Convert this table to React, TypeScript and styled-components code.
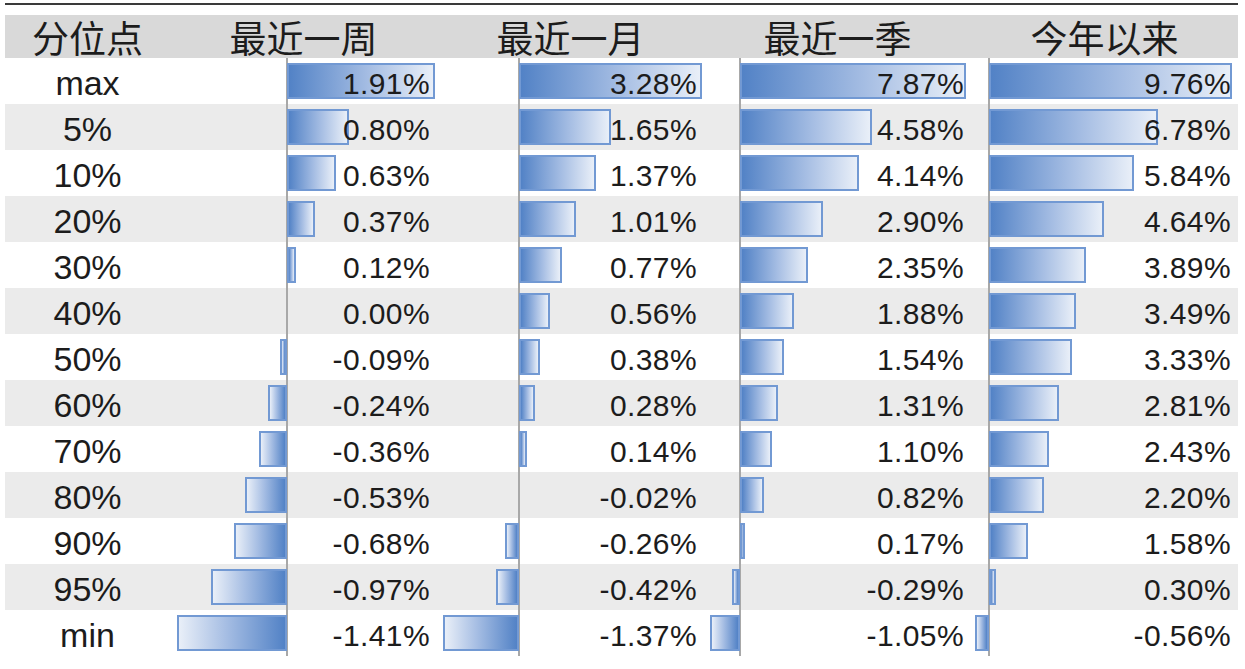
import React from 'react';
import styled, { createGlobalStyle } from 'styled-components';

const GlobalStyle = createGlobalStyle`
    body {
        margin: 0;
        background: #ffffff;
        font-family: 'Liberation Sans', Arial, sans-serif;
        color: #1c1c1c;
    }
`;

const LABEL_W = 165;
const COL_W = 267;

const labels = ['max', '5%', '10%', '20%', '30%', '40%', '50%', '60%', '70%', '80%', '90%', '95%', 'min'];

// lo / hi: pixel offsets inside a column where the min and max bars end
const columns = [
    { title: '最近一周', lo: 7, hi: 265, values: [1.91, 0.8, 0.63, 0.37, 0.12, 0.0, -0.09, -0.24, -0.36, -0.53, -0.68, -0.97, -1.41] },
    { title: '最近一月', lo: 6, hi: 265, values: [3.28, 1.65, 1.37, 1.01, 0.77, 0.56, 0.38, 0.28, 0.14, -0.02, -0.26, -0.42, -1.37] },
    { title: '最近一季', lo: 6, hi: 262, values: [7.87, 4.58, 4.14, 2.9, 2.35, 1.88, 1.54, 1.31, 1.1, 0.82, 0.17, -0.29, -1.05] },
    { title: '今年以来', lo: 4, hi: 261, values: [9.76, 6.78, 5.84, 4.64, 3.89, 3.49, 3.33, 2.81, 2.43, 2.2, 1.58, 0.3, -0.56] },
];

const Page = styled.div`
    padding: 3px 0 0 5px;
    width: ${LABEL_W + COL_W * 4}px;
`;

const TopRule = styled.div`
    height: 2px;
    background: #3a3a3a;
    margin-bottom: 10px;
`;

const HeaderRow = styled.div`
    display: grid;
    grid-template-columns: ${LABEL_W}px repeat(4, ${COL_W}px);
    height: 43px;
    background: #d9d9d9;
`;

const HeaderCell = styled.div`
    font-family: 'Noto Sans CJK SC', 'Liberation Sans', sans-serif;
    font-size: 37px;
    line-height: 44px;
    text-align: center;
    color: #1c1c1c;
    white-space: nowrap;
`;

const Row = styled.div<{ $shade: boolean }>`
    display: grid;
    grid-template-columns: ${LABEL_W}px repeat(4, ${COL_W}px);
    height: 46px;
    background: ${p => (p.$shade ? '#ebebeb' : '#ffffff')};
`;

const Label = styled.div`
    font-size: 34px;
    line-height: 50px;
    text-align: center;
    color: #1c1c1c;
`;

const Cell = styled.div<{ $last: boolean }>`
    position: relative;
    display: flex;
    align-items: center;
    justify-content: flex-end;
    padding: 1px 7px 0 0;

    .axis {
        position: absolute;
        top: 0;
        bottom: ${p => (p.$last ? '-4px' : '0')};
        width: 2px;
        background: #a8a8a8;
    }
`;

const Bar = styled.div<{ $neg: boolean }>`
    position: absolute;
    top: 5px;
    height: 36px;
    box-sizing: border-box;
    border: 2px solid #7299d3;
    background: linear-gradient(${p => (p.$neg ? 'to left' : 'to right')}, #5282c6 0%, #a5bde3 55%, #e9eff8 100%);
`;

const Value = styled.span`
    position: relative;
    font-size: 30px;
    letter-spacing: 0.4px;
    color: #1c1c1c;
`;

const fmt = (v: number) => `${v.toFixed(2)}%`;

const App = () => {
    return (
        <Page>
            <GlobalStyle />
            <TopRule />
            <HeaderRow>
                <HeaderCell>分位点</HeaderCell>
                {columns.map(c => (
                    <HeaderCell key={c.title}>{c.title}</HeaderCell>
                ))}
            </HeaderRow>
            {labels.map((label, i) => (
                <Row key={label} $shade={i % 2 === 1}>
                    <Label>{label}</Label>
                    {columns.map(c => {
                        const min = c.values[c.values.length - 1];
                        const max = c.values[0];
                        const scale = (c.hi - c.lo) / (max - min);
                        const axis = c.lo + -min * scale;
                        const v = c.values[i];
                        const w = Math.abs(v) * scale;
                        return (
                            <Cell key={c.title} $last={i === labels.length - 1}>
                                <div className="axis" style={{ left: axis - 1 }} />
                                {w >= 2 && (
                                    <Bar $neg={v < 0} style={{ left: v < 0 ? axis - w : axis, width: w }} />
                                )}
                                <Value>{fmt(v)}</Value>
                            </Cell>
                        );
                    })}
                </Row>
            ))}
        </Page>
    );
};

export default App;
